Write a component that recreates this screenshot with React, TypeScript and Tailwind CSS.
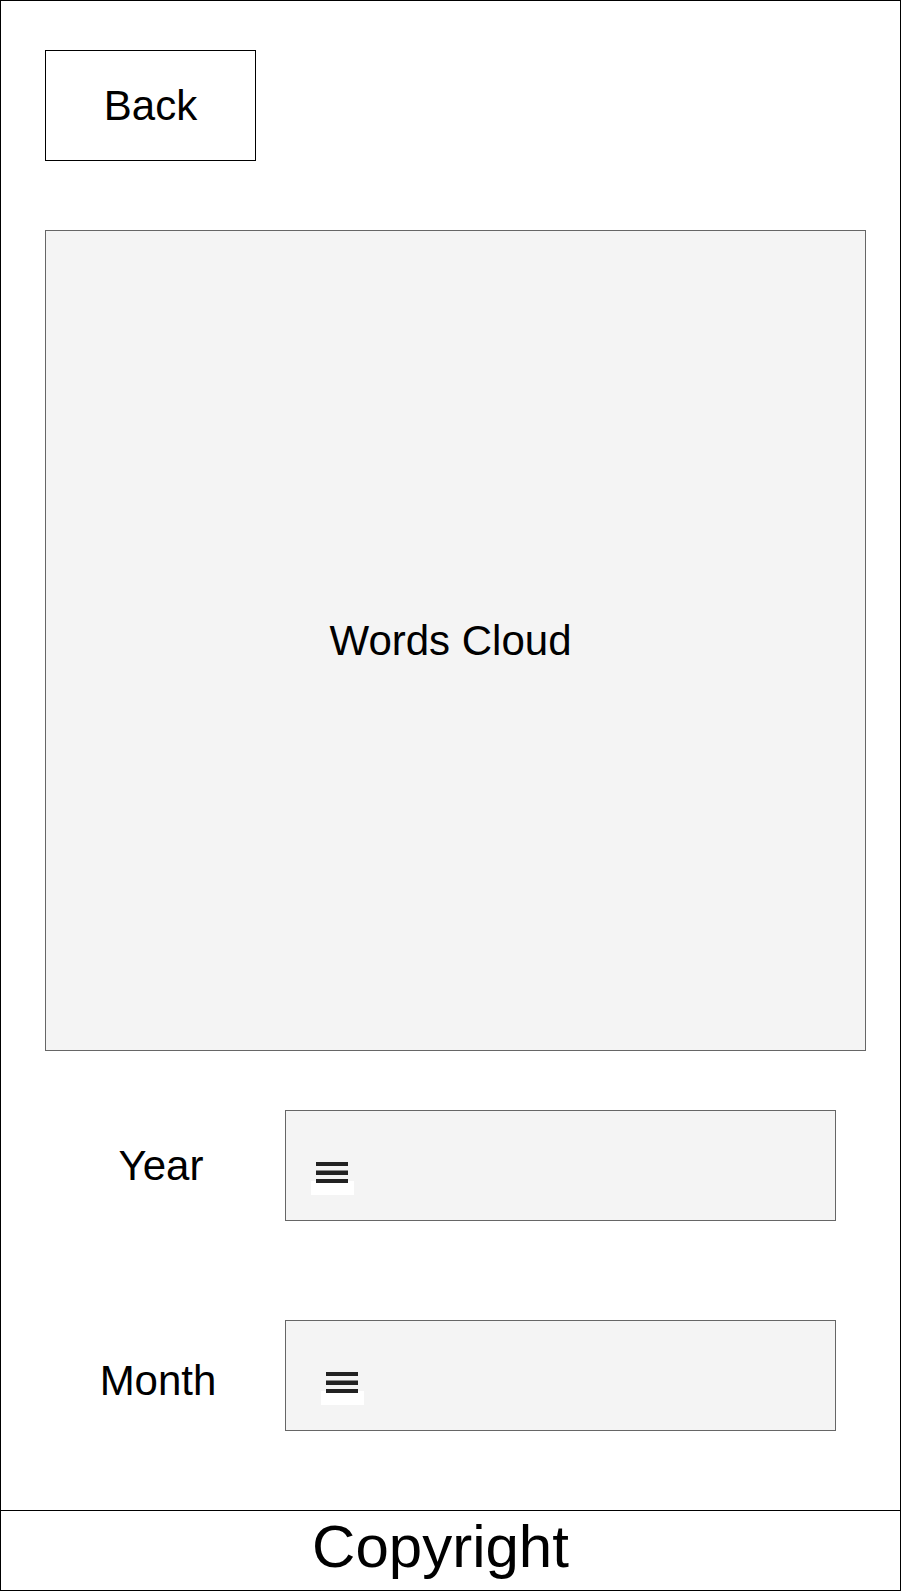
import React from 'react';

function MenuIcon() {
	return (
		<svg width="43" height="33" viewBox="0 0 43 33">
			<rect x="0" y="19" width="43" height="14" fill="#ffffff" />
			<rect x="5" y="0" width="32" height="4" fill="#222222" />
			<rect x="5" y="8.5" width="32" height="4.5" fill="#222222" />
			<rect x="5" y="17" width="32" height="4" fill="#222222" />
		</svg>
	);
}

function SelectRow({ label, labelClass, iconClass }: { label: string; labelClass: string; iconClass: string }) {
	return (
		<div className="flex items-center">
			<div className={`w-[240px] shrink-0 text-center text-[42px] leading-none ${labelClass}`}>{label}</div>
			<div className={`w-[551px] h-[111px] border border-[#666666] bg-[#f4f4f4] ${iconClass}`}>
				<MenuIcon />
			</div>
		</div>
	);
}

export default function App() {
	return (
		<div
			className="w-[901px] h-[1591px] border border-black flex flex-col bg-white text-black"
			style={{ fontFamily: '"Liberation Sans", Arial, sans-serif' }}
		>
			<main className="flex-1 pl-[44px] pt-[49px]">
				<button className="w-[211px] h-[111px] border border-black flex items-center justify-center text-[42px] leading-none">
					Back
				</button>

				<section className="mt-[69px] w-[821px] h-[821px] border border-[#666666] bg-[#f4f4f4] flex items-center justify-center pr-[10px]">
					<span className="text-[42px] leading-none">Words Cloud</span>
				</section>

				<div className="mt-[59px]">
					<SelectRow label="Year" labelClass="pr-[8px]" iconClass="pl-[25px] pt-[51px]" />
				</div>
				<div className="mt-[99px]">
					<SelectRow label="Month" labelClass="pr-[14px] pt-[10px]" iconClass="pl-[35px] pt-[51px]" />
				</div>
			</main>

			<footer className="h-[80px] border-t border-black flex items-center justify-center pr-[20px] pb-[8px]">
				<span className="text-[60px] leading-none">Copyright</span>
			</footer>
		</div>
	);
}
